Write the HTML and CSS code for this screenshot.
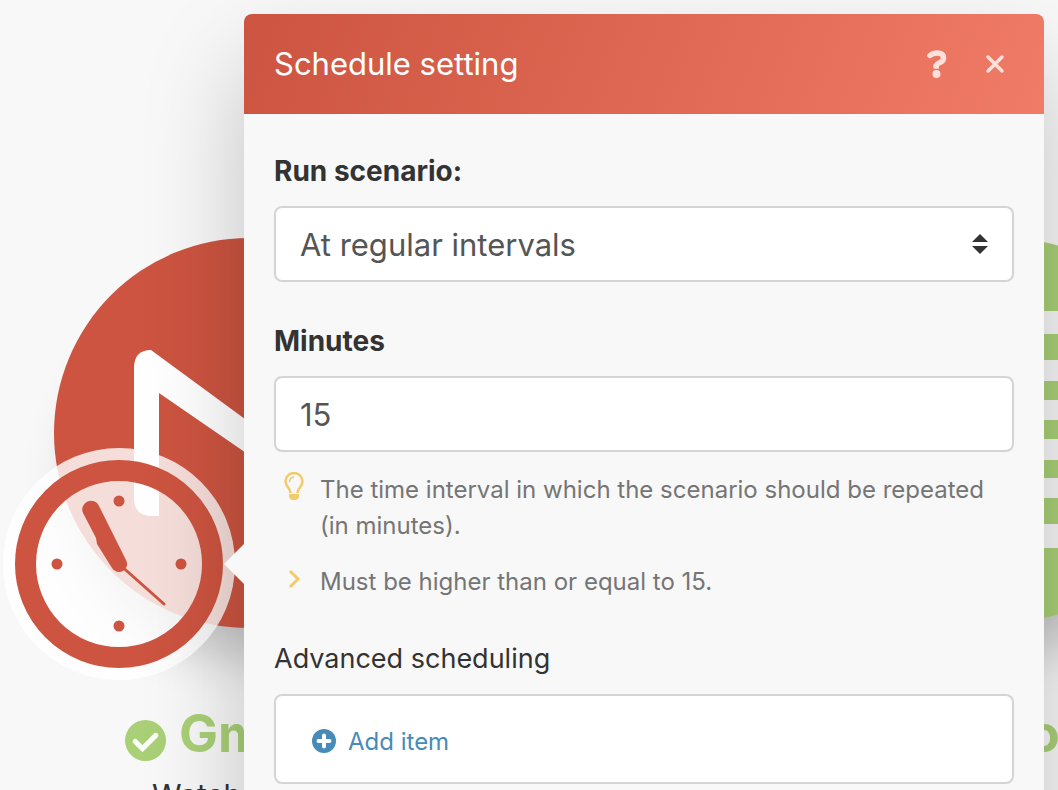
FILE: index.html
```
<!DOCTYPE html>
<html lang="en">
<head>
    <meta charset="UTF-8">
    <meta name="viewport" content="width=device-width, initial-scale=1.0">
    <title>Schedule setting</title>
    <link rel="stylesheet" href="styles.css">
</head>
<body>
    <!-- Scenario canvas behind the dialog -->
    <div class="canvas">
        <div class="node node-gmail">
            <svg class="node-icon" viewBox="0 0 390 390" aria-hidden="true">
                <path fill="#fff" d="M80 130Q80 112 97 112L195 184L293 112Q310 112 310 130V262Q310 278 293 278H285V155L195 217L105 155V278H98Q80 278 80 260Z"/>
            </svg>
        </div>
        <div class="node-title gmail-title">
            <svg class="check" viewBox="0 0 40 40" aria-hidden="true">
                <circle cx="20" cy="20" r="20" fill="#a9d077"/>
                <path d="M10 21L17 28L30 15" fill="none" stroke="#fff" stroke-width="5" stroke-linecap="round"/>
            </svg>
            <span>Gmail</span>
        </div>
        <div class="node-text">Watch emails</div>

        <div class="node node-sheets">
            <svg class="node-icon" viewBox="0 0 384 384" aria-hidden="true">
                <g fill="#f7f7f7">
                    <rect x="80" y="73" width="230" height="23"/>
                    <rect x="80" y="122" width="230" height="21"/>
                    <rect x="80" y="162" width="230" height="20"/>
                    <rect x="80" y="201" width="230" height="21"/>
                    <rect x="80" y="240" width="230" height="20"/>
                    <rect x="80" y="286" width="230" height="24"/>
                </g>
            </svg>
        </div>
        <div class="node-title sheets-title">o</div>

        <svg class="clock" viewBox="0 0 234 234" aria-hidden="true">
            <circle cx="117" cy="117" r="116" fill="#fff" fill-opacity="0.8"/>
            <circle cx="117" cy="117" r="93.5" fill="none" stroke="#cc5440" stroke-width="21"/>
            <g fill="#cc5440">
                <circle cx="117" cy="54" r="5.5"/>
                <circle cx="179" cy="117" r="5.5"/>
                <circle cx="117" cy="179" r="5.5"/>
                <circle cx="55" cy="117" r="5.5"/>
                <path d="M81 66A8 8 0 0 1 97 59L124 113A8 8 0 0 1 110 121L95 97L94 91Z"/>
            </g>
            <path d="M117 117L162 157" stroke="#cc5440" stroke-width="3" stroke-linecap="round"/>
        </svg>
    </div>

    <div class="dialog" role="dialog" aria-labelledby="dialog-title">
        <header class="dialog-header">
            <h1 id="dialog-title">Schedule setting</h1>
            <button type="button" class="icon-btn" aria-label="Help">
                <svg width="20" height="28" viewBox="0 0 20 28">
                    <path d="M3 5.500Q6 3 10 3Q16.500 3 16.500 8Q16.500 11 13 12.500Q9.500 14 9.200 16" fill="none" stroke="currentColor" stroke-width="5.500" stroke-linecap="round"/>
                    <path d="M6.500 14H12V18.500H6.500Z" fill="currentColor"/>
                    <circle cx="9.500" cy="24" r="4" fill="currentColor"/>
                </svg>
            </button>
            <button type="button" class="icon-btn" aria-label="Close">
                <svg width="20" height="20" viewBox="0 0 20 20">
                    <path d="M3 3L17 17M17 3L3 17" stroke="currentColor" stroke-width="3.500" stroke-linecap="round"/>
                </svg>
            </button>
        </header>
        <form class="dialog-body">
            <div class="field">
                <label for="run">Run scenario:</label>
                <div class="select-wrap">
                    <select id="run" class="control">
                        <option>At regular intervals</option>
                    </select>
                    <svg class="arrows" width="16" height="20" viewBox="0 0 16 20" aria-hidden="true">
                        <path d="M8 0L16 8H0ZM8 20L16 12H0Z" fill="#333"/>
                    </svg>
                </div>
            </div>
            <div class="field">
                <label for="minutes">Minutes</label>
                <input id="minutes" class="control" type="text" value="15">
                <ul class="hints">
                    <li>
                        <svg class="hint-icon" viewBox="0 0 20 28" aria-hidden="true">
                            <path d="M6.500 21C6.500 16 1.500 15 1.500 9A8.500 8 0 0 1 18.500 9C18.500 15 13.500 16 13.500 21" fill="none" stroke="#f3cb6b" stroke-width="2.500"/>
                            <path d="M5.500 10Q5.500 5.500 10 5" fill="none" stroke="#f3cb6b" stroke-width="1.500"/>
                            <path d="M5 22H15V25Q14 28 12 28H8Q6 28 5 25Z" fill="#f3cb6b"/>
                        </svg>
                        <span>The time interval in which the scenario should be repeated (in minutes).</span>
                    </li>
                    <li>
                        <svg class="hint-icon" viewBox="0 0 20 28" aria-hidden="true">
                            <path d="M6 7L14 15L6 23" fill="none" stroke="#f3cb6b" stroke-width="3"/>
                        </svg>
                        <span>Must be higher than or equal to 15.</span>
                    </li>
                </ul>
            </div>
            <div class="field">
                <h2>Advanced scheduling</h2>
                <div class="items">
                    <button type="button" class="add-btn">
                        <svg width="24" height="24" viewBox="0 0 24 24" aria-hidden="true">
                            <circle cx="12" cy="12" r="12" fill="#478bb8"/>
                            <path d="M12 6.500V17.500M6.500 12H17.500" stroke="#fff" stroke-width="4" stroke-linecap="round"/>
                        </svg>
                        Add item
                    </button>
                </div>
            </div>
        </form>
    </div>
</body>
</html>
```

FILE: styles.css
```
* {
    box-sizing: border-box;
}

body {
    font-family: Inter, sans-serif;
    background: #f8f8f8;
    color: #333;
    margin: 0;
    height: 100vh;
    overflow: hidden;
    position: relative;
}

/* canvas */
.canvas {
    position: absolute;
    inset: 0;
    overflow: hidden;
}

.node {
    position: absolute;
    top: 238px;
    width: 390px;
    height: 390px;
    border-radius: 50%;
    box-shadow: 0 50px 50px -20px rgba(0, 0, 0, 0.2);
}

.node-gmail {
    left: 54px;
    background: #cc5440;
}

.node-sheets {
    left: 813px;
    width: 384px;
    height: 384px;
    background: #a9d077;
}

.node-icon {
    display: block;
    width: 100%;
}

.node-title {
    position: absolute;
    top: 704px;
    display: flex;
    align-items: center;
    gap: 13px;
    font-size: 52px;
    line-height: 60px;
    font-weight: bold;
    color: #a9d077;
}

.gmail-title {
    left: 125px;
}

.sheets-title {
    left: 1028px;
}

.check {
    width: 41px;
    margin-top: 12px;
}

.node-text {
    position: absolute;
    left: 152px;
    top: 777px;
    font-size: 30px;
    line-height: 36px;
}

.clock {
    position: absolute;
    left: 2px;
    top: 447px;
    width: 234px;
}

/* dialog */
.dialog {
    position: relative;
    margin: 14px 14px 0 244px;
    background: #f8f8f8;
    border-radius: 8px;
    box-shadow: 0 50px 100px rgba(0, 0, 0, 0.22);
}

.dialog::before {
    content: "";
    position: absolute;
    top: 530px;
    left: -20px;
    border: 20px solid transparent;
    border-left: 0;
    border-right-color: #f8f8f8;
}

.dialog-header {
    display: flex;
    align-items: center;
    height: 100px;
    padding: 0 30px;
    border-radius: 8px 8px 0 0;
    background: linear-gradient(110deg, #cc5440, #f07b66);
    color: #fff;
}

h1 {
    flex: 1;
    margin: 0;
    font-size: 31px;
    line-height: 40px;
    font-weight: normal;
}

.icon-btn {
    display: flex;
    justify-content: center;
    align-items: center;
    width: 38px;
    height: 40px;
    padding: 0;
    margin-left: 20px;
    border: none;
    background: none;
    color: #ffe0db;
    cursor: pointer;
}

.dialog-body {
    padding: 39px 30px;
}

.field {
    margin-bottom: 41px;
}

label,
h2 {
    display: block;
    margin: 0 0 17px;
    line-height: 36px;
}

label {
    font-size: 28px;
    font-weight: bold;
}

h2 {
    font-size: 27px;
    font-weight: normal;
}

.control {
    display: block;
    width: 100%;
    height: 76px;
    padding: 0 24px;
    border: 2px solid #d4d4d4;
    border-radius: 8px;
    background: #fff;
    color: #555;
    font-family: inherit;
    font-size: 31px;
    appearance: none;
}

.select-wrap {
    position: relative;
}

.arrows {
    position: absolute;
    right: 26px;
    top: 28px;
    pointer-events: none;
}

.hints {
    list-style: none;
    margin: 20px 0 0;
    padding: 0 10px;
    color: #757575;
    font-size: 24px;
    line-height: 36px;
}

.hints li {
    display: flex;
    gap: 16px;
    margin-bottom: 20px;
}

.hint-icon {
    flex: none;
    width: 20px;
    height: 28px;
}

.items {
    display: flex;
    height: 90px;
    padding: 4px 36px 0;
    border: 2px solid #d4d4d4;
    border-radius: 8px;
    background: #fff;
}

.add-btn {
    display: flex;
    align-items: center;
    gap: 12px;
    padding: 0;
    border: none;
    background: none;
    color: #478bb8;
    font-family: inherit;
    font-size: 24px;
    cursor: pointer;
}
```
